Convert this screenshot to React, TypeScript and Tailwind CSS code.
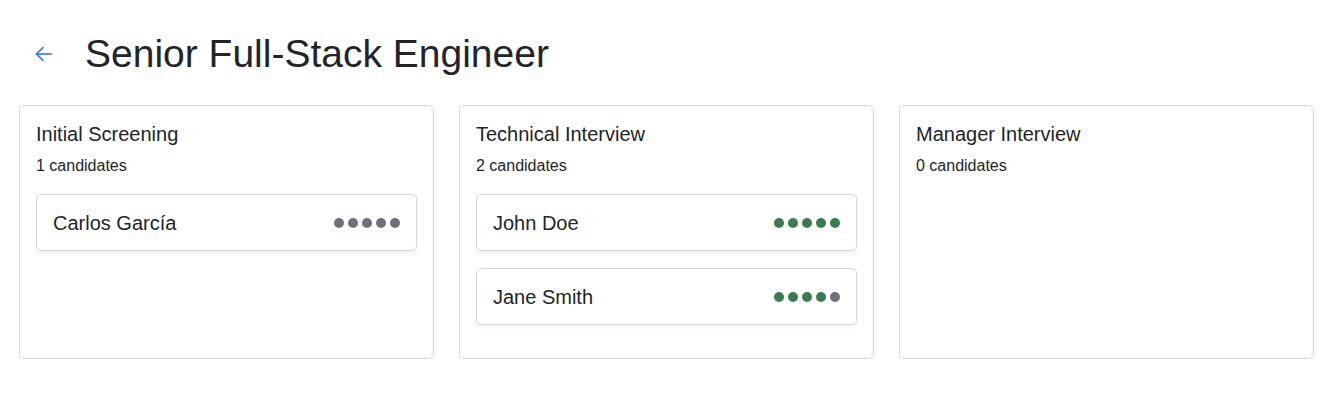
type Candidate = {
  id: number
  name: string
  score: number
}

type Stage = {
  id: number
  title: string
  candidates: Candidate[]
}

const stages: Stage[] = [
  {
    id: 1,
    title: 'Initial Screening',
    candidates: [{ id: 1, name: 'Carlos García', score: 0 }],
  },
  {
    id: 2,
    title: 'Technical Interview',
    candidates: [
      { id: 2, name: 'John Doe', score: 5 },
      { id: 3, name: 'Jane Smith', score: 4 },
    ],
  },
  { id: 3, title: 'Manager Interview', candidates: [] },
]

const BackArrow = () => (
  <svg
    width="18"
    height="16"
    viewBox="0 0 18 16"
    fill="none"
    stroke="currentColor"
    strokeWidth="1.6"
    strokeLinecap="round"
    strokeLinejoin="round"
  >
    <path d="M16.5 8H1.5" />
    <path d="M8 1.5L1.5 8L8 14.5" />
  </svg>
)

const Score = ({ value }: { value: number }) => {
  return (
    <div className="flex gap-1">
      {[1, 2, 3, 4, 5].map((n) => (
        <span
          key={n}
          className={
            n <= value
              ? 'h-[10px] w-[10px] rounded-full bg-[#3a7b4f]'
              : 'h-[10px] w-[10px] rounded-full bg-[#6c717b]'
          }
        />
      ))}
    </div>
  )
}

const CandidateCard = ({ candidate }: { candidate: Candidate }) => {
  return (
    <div className="flex h-[57px] items-center justify-between rounded-[5px] border border-[#d6d6d6] bg-white px-4 shadow-[0_2px_4px_rgba(0,0,0,0.06)]">
      <span className="text-[20px] leading-6">{candidate.name}</span>
      <Score value={candidate.score} />
    </div>
  )
}

const App = () => {
  return (
    <div className="min-h-[400px] bg-white font-['Liberation_Sans',Arial,sans-serif] text-[#212529]">
      <div className="flex items-center pl-[34px] pt-[26px]">
        <button className="flex h-[20px] w-[20px] items-center justify-center text-[#2f6fea]">
          <BackArrow />
        </button>
        <h1 className="ml-[31px] text-[39px] leading-[56px] font-normal">
          Senior Full-Stack Engineer
        </h1>
      </div>
      <div className="mt-[23px] grid grid-cols-3 gap-[25px] pl-[19px] pr-[26px]">
        {stages.map((stage) => (
          <div
            key={stage.id}
            className="min-h-[254px] rounded-[5px] border border-[#d9d9d9] bg-white p-4"
          >
            <h5 className="mb-2 text-[20px] leading-6">{stage.title}</h5>
            <p className="mb-4 text-[16px] leading-6">
              {stage.candidates.length} candidates
            </p>
            <div className="flex flex-col gap-[17px]">
              {stage.candidates.map((candidate) => (
                <CandidateCard key={candidate.id} candidate={candidate} />
              ))}
            </div>
          </div>
        ))}
      </div>
    </div>
  )
}

export default App
